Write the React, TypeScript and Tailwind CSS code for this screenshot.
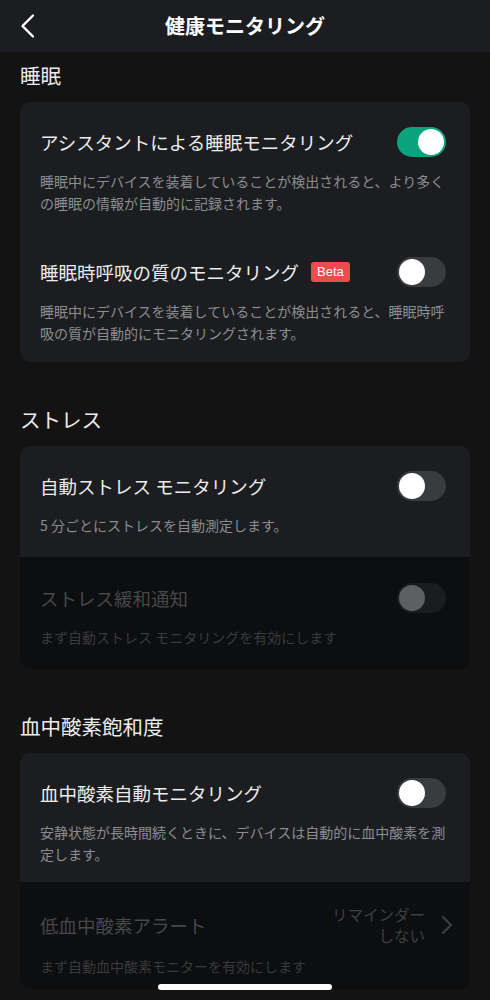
interface rowdata {
  title: string;
  desc: string;
  on?: boolean;
  beta?: boolean;
  disabled?: boolean;
  pt: string;
  pb: string;
}

function Toggle({ on, disabled }: { on?: boolean; disabled?: boolean }) {
  if (disabled) {
    return (
      <div className="w-[49px] h-[30px] rounded-full bg-[#1b1c1e] flex items-center px-[2px] shrink-0">
        <div className="w-[26px] h-[26px] rounded-full bg-[#5e5f61]" />
      </div>
    );
  }
  return (
    <div
      className={
        on
          ? "w-[49px] h-[30px] rounded-full bg-[#0ba37c] flex items-center justify-end px-[2px] shrink-0"
          : "w-[49px] h-[30px] rounded-full bg-[#3a3b3f] flex items-center px-[2px] shrink-0"
      }
    >
      <div className="w-[26px] h-[26px] rounded-full bg-white" />
    </div>
  );
}

function Row({ data }: { data: rowdata }) {
  return (
    <div className={`${data.disabled ? "bg-[#0d0e0f]" : ""} pl-5 pr-6 ${data.pt} ${data.pb}`}>
      <div className="flex items-center justify-between h-[30px]">
        <div className="flex items-center gap-[12px]">
          <span
            className={`text-[18.5px] leading-[30px] ${data.disabled ? "text-[#47484a]" : "text-[#ececec]"}`}
          >
            {data.title}
          </span>
          {data.beta && (
            <span className="bg-[#ee4b4f] text-white text-[13px] leading-[20px] px-[6px] rounded-[3px] font-['Liberation_Sans',sans-serif]">
              Beta
            </span>
          )}
        </div>
        <Toggle on={data.on} disabled={data.disabled} />
      </div>
      <p className={`mt-[13px] text-[14px] leading-[22px] ${data.disabled ? "text-[#393a3c]" : "text-[#8c8d90]"}`}>
        {data.desc}
      </p>
    </div>
  );
}

function Section({ title, first, children }: { title: string; first?: boolean; children: React.ReactNode }) {
  return (
    <section className={first ? "pt-[10px]" : "pt-[44px]"}>
      <h2 className="px-5 text-[20.5px] leading-[27px] text-[#ececec]">{title}</h2>
      <div className="mx-5 mt-[13px] rounded-[10px] bg-[#1c1d20] overflow-hidden">{children}</div>
    </section>
  );
}

const sleep: rowdata[] = [
  {
    title: "アシスタントによる睡眠モニタリング",
    desc: "睡眠中にデバイスを装着していることが検出されると、より多くの睡眠の情報が自動的に記録されます。",
    on: true,
    pt: "pt-[25px]",
    pb: "pb-[18px]",
  },
  {
    title: "睡眠時呼吸の質のモニタリング",
    desc: "睡眠中にデバイスを装着していることが検出されると、睡眠時呼吸の質が自動的にモニタリングされます。",
    beta: true,
    pt: "pt-[25px]",
    pb: "pb-[18px]",
  },
];

const stress: rowdata[] = [
  {
    title: "自動ストレス モニタリング",
    desc: "5 分ごとにストレスを自動測定します。",
    pt: "pt-[25px]",
    pb: "pb-[21px]",
  },
  {
    title: "ストレス緩和通知",
    desc: "まず自動ストレス モニタリングを有効にします",
    disabled: true,
    pt: "pt-[26px]",
    pb: "pb-[21px]",
  },
];

export default function App() {
  return (
    <div className="relative h-[1000px] overflow-hidden bg-[#131314] font-['Noto_Sans_CJK_JP','Noto_Sans',sans-serif]">
      <header className="relative h-[52px] bg-[#1c1d20] flex items-center justify-center">
        <svg className="absolute left-[19px] top-[13px]" width="18" height="26" viewBox="0 0 18 26" fill="none">
          <polyline points="14,2.5 3.5,13 14,23.5" stroke="white" strokeWidth="2.4" strokeLinecap="round" strokeLinejoin="round" />
        </svg>
        <h1 className="text-[20px] font-bold text-white leading-none">健康モニタリング</h1>
      </header>

      <Section title="睡眠" first>
        {sleep.map((r, i) => (
          <Row key={i} data={r} />
        ))}
      </Section>

      <Section title="ストレス">
        {stress.map((r, i) => (
          <Row key={i} data={r} />
        ))}
      </Section>

      <Section title="血中酸素飽和度">
        <Row
          data={{
            title: "血中酸素自動モニタリング",
            desc: "安静状態が長時間続くときに、デバイスは自動的に血中酸素を測定します。",
            pt: "pt-[25px]",
            pb: "pb-[17px]",
          }}
        />
        <div className="bg-[#0d0e0f] pl-5 pr-[17px] pt-[22px] pb-[12px]">
          <div className="flex items-center justify-between">
            <span className="text-[18.5px] leading-[30px] text-[#47484a]">低血中酸素アラート</span>
            <div className="flex items-center gap-[16px]">
              <p className="text-right text-[15.5px] leading-[21px] text-[#3e3f41]">
                リマインダー
                <br />
                しない
              </p>
              <svg width="12" height="20" viewBox="0 0 12 20" fill="none">
                <polyline points="2,2 10,10 2,18" stroke="#3e3f41" strokeWidth="2.2" strokeLinecap="round" strokeLinejoin="round" />
              </svg>
            </div>
          </div>
          <p className="mt-[9px] text-[14px] leading-[22px] text-[#393a3c]">まず自動血中酸素モニターを有効にします</p>
        </div>
      </Section>

      <div className="absolute left-[158px] bottom-[10px] w-[174px] h-[6px] rounded-full bg-white" />
    </div>
  );
}
